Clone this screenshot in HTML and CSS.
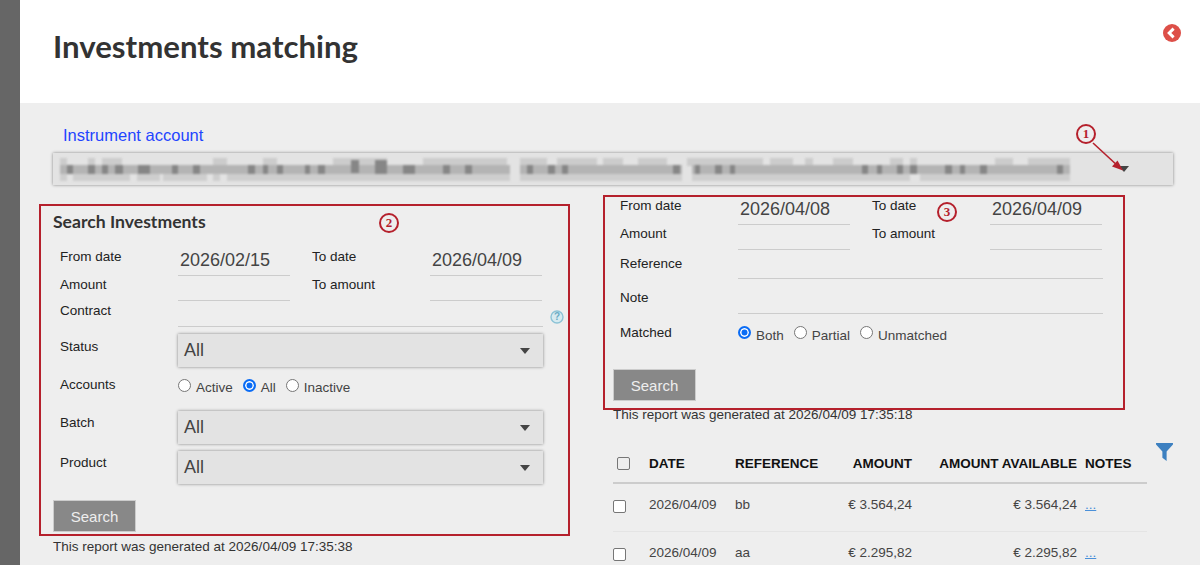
FILE: index.html
```html
<!DOCTYPE html>
<html lang="en">
<head>
    <meta charset="utf-8">
    <title>Investments matching</title>
    <link rel="stylesheet" href="styles.css">
</head>
<body>
    <div class="side-bar"></div>
    <div class="page">
        <header class="page-header">
            <h1>Investments matching</h1>
            <svg class="back-icon" viewBox="0 0 18 18" width="18" height="18">
                <circle cx="9" cy="9" r="9" fill="#dd4f48"/>
                <path d="M10.6 4.6 6.2 9l4.4 4.4" fill="none" stroke="#fff" stroke-width="3"/>
            </svg>
        </header>

        <main class="content">
            <div class="account-label">Instrument account</div>
            <div class="account-select">
                <!-- blurred account name -->
                <svg class="mosaic" width="1012" height="26" viewBox="0 0 1012 26">
                    <path fill="#cecece" d="M0 17h7v8H0zM13 17h57v8H13zM77 17h23v8H77zM103 17h44v8h-44zM153 17h7v8h-7zM167 17h283v8H167zM460 17h162v8H460zM632 17h218v8H632zM860 17h150v8H860z"/>
                    <path fill="#cccccc" d="M0 2h7v8H0zM28 2h7v8h-7zM42 2h20v8H42zM153 2h14v8h-14zM203 2h14v8h-14zM273 2h54v8h-54zM363 2h84v8h-84zM460 2h27v8h-27zM497 2h40v8h-40zM543 2h20v8h-20zM578 2h29v8h-29zM627 2h76v8h-76zM710 2h23v8h-23zM745 2h8v8h-8zM773 2h20v8h-20zM830 2h13v8h-13zM850 2h7v8h-7zM935 2h18v8h-18zM968 2h42v8h-42z"/>
                    <path fill="#b4b4b4" d="M0 9h450v9H0zM460 9h162v9H460zM632 9h378v9H632z"/>
                    <path fill="#868686" d="M7 9h6v9H7zM28 9h7v9h-7zM42 9h6v9h-6zM55 9h8v9h-8zM78 9h12v9H78zM112 9h6v9h-6zM133 9h7v9h-7zM188 9h7v9h-7zM203 9h5v9h-5zM217 9h6v9h-6zM245 9h5v9h-5zM258 9h7v9h-7zM291 4h8v13h-8zM315 4h12v14h-12zM343 9h12v9h-12zM383 9h7v9h-7zM405 9h7v9h-7zM467 9h6v9h-6zM488 9h7v9h-7zM502 9h6v9h-6zM613 9h7v9h-7zM635 9h5v9h-5zM655 9h7v9h-7zM670 9h5v9h-5zM802 9h6v9h-6zM817 9h5v9h-5zM837 9h6v9h-6zM850 9h7v9h-7zM885 9h7v9h-7zM900 9h5v9h-5zM920 9h7v9h-7zM997 9h6v9h-6z"/>
                </svg>
                <span class="caret"></span>
            </div>

            <div class="columns">
                <section class="panel-left">
                    <h2>Search Investments</h2>
                    <div class="form-grid">
                        <div class="row two">
                            <label>From date</label><div class="field date">2026/02/15</div>
                            <label>To date</label><div class="field date">2026/04/09</div>
                        </div>
                        <div class="row two">
                            <label>Amount</label><div class="field"></div>
                            <label>To amount</label><div class="field"></div>
                        </div>
                        <div class="row one contract-row">
                            <label>Contract</label><div class="field"></div>
                            <svg class="help-icon" viewBox="0 0 14 14" width="14" height="14">
                                <circle cx="7" cy="7" r="6" fill="#d6eaf0" stroke="#8cc3d6" stroke-width="1.4"/>
                                <text x="7" y="10.4" text-anchor="middle" class="help-mark">?</text>
                            </svg>
                        </div>
                        <div class="row one select-row status-row">
                            <label>Status</label><div class="select">All<span class="caret"></span></div>
                        </div>
                        <div class="row one radio-row accounts-row">
                            <label>Accounts</label>
                            <div class="radios">
                                <span class="radio-item"><span class="radio"></span>Active</span>
                                <span class="radio-item"><span class="radio checked"></span>All</span>
                                <span class="radio-item"><span class="radio"></span>Inactive</span>
                            </div>
                        </div>
                        <div class="row one select-row">
                            <label>Batch</label><div class="select">All<span class="caret"></span></div>
                        </div>
                        <div class="row one select-row product-row">
                            <label>Product</label><div class="select">All<span class="caret"></span></div>
                        </div>
                    </div>
                    <button class="search-btn" type="button">Search</button>
                    <p class="generated">This report was generated at 2026/04/09 17:35:38</p>
                </section>

                <section class="panel-right">
                    <div class="form-grid">
                        <div class="row two">
                            <label>From date</label><div class="field date">2026/04/08</div>
                            <label>To date</label><div class="field date">2026/04/09</div>
                        </div>
                        <div class="row two">
                            <label>Amount</label><div class="field"></div>
                            <label>To amount</label><div class="field"></div>
                        </div>
                        <div class="row one reference-row">
                            <label>Reference</label><div class="field"></div>
                        </div>
                        <div class="row one note-row">
                            <label>Note</label><div class="field"></div>
                        </div>
                        <div class="row one radio-row matched-row">
                            <label>Matched</label>
                            <div class="radios">
                                <span class="radio-item"><span class="radio checked"></span>Both</span>
                                <span class="radio-item"><span class="radio"></span>Partial</span>
                                <span class="radio-item"><span class="radio"></span>Unmatched</span>
                            </div>
                        </div>
                    </div>
                    <button class="search-btn" type="button">Search</button>
                    <p class="generated">This report was generated at 2026/04/09 17:35:18</p>

                    <svg class="filter-icon" viewBox="0 0 16 17" width="17" height="18">
                        <path d="M0 0h16v1.5L10 8v9l-4-3V8L0 1.5z" fill="#3d80c0"/>
                    </svg>
                    <table class="results">
                        <thead>
                            <tr>
                                <th class="col-check"><span class="checkbox head-check"></span></th>
                                <th class="col-date">DATE</th>
                                <th class="col-ref">REFERENCE</th>
                                <th class="col-amount num">AMOUNT</th>
                                <th class="col-avail num">AMOUNT AVAILABLE</th>
                                <th class="col-notes">NOTES</th>
                            </tr>
                        </thead>
                        <tbody>
                            <tr>
                                <td class="cell-check"><span class="checkbox"></span></td>
                                <td>2026/04/09</td>
                                <td>bb</td>
                                <td class="num">€ 3.564,24</td>
                                <td class="num">€ 3.564,24</td>
                                <td class="col-notes"><a class="notes-link" href="#">...</a></td>
                            </tr>
                            <tr>
                                <td class="cell-check"><span class="checkbox"></span></td>
                                <td>2026/04/09</td>
                                <td>aa</td>
                                <td class="num">€ 2.295,82</td>
                                <td class="num">€ 2.295,82</td>
                                <td class="col-notes"><a class="notes-link" href="#">...</a></td>
                            </tr>
                        </tbody>
                    </table>
                </section>
            </div>
        </main>
    </div>

    <!-- red annotations drawn over the screenshot -->
    <div class="mark-box box-left"></div>
    <div class="mark-box box-right"></div>
    <span class="mark-num num-one">1</span>
    <span class="mark-num num-two">2</span>
    <span class="mark-num num-three">3</span>
    <svg class="mark-arrow" viewBox="0 0 40 40" width="40" height="40">
        <path d="M1 1 27 25" stroke="#b5202c" stroke-width="1.6" fill="none"/>
        <path d="M31 28.5 20 24.5l5.5-6z" fill="#b5202c"/>
    </svg>
</body>
</html>
```

FILE: styles.css
```css
* {
    box-sizing: border-box;
}
html, body {
    height: 100%;
    overflow: hidden;
}
body {
    margin: 0;
    display: flex;
    font-family: "Liberation Sans", Arial, sans-serif;
    font-size: 13.5px;
    color: #333;
    background-color: #eee;
}
.side-bar {
    flex: 0 0 20px;
    background-color: #666;
}
.page {
    flex: 1;
    min-width: 0;
}
.page-header {
    height: 103px;
    background-color: white;
    display: flex;
    justify-content: space-between;
    align-items: flex-start;
    padding: 24px 19px 0 33px;
}
.page-header h1 {
    margin: 2px 0 0;
    font-family: Lato, sans-serif;
    font-size: 31.2px;
    font-weight: 700;
    line-height: 40px;
    color: #333;
}
.content {
    padding: 23px 27px 0 33px;
}
.account-label {
    margin-left: 10px;
    font-size: 16.5px;
    line-height: 18px;
    color: #1f45ff;
}
.account-select {
    margin-top: 9px;
    height: 32px;
    background-color: #e3e3e3;
    box-shadow: 0 0 3px rgba(0, 0, 0, 0.45);
    display: flex;
    align-items: center;
    justify-content: space-between;
    padding: 0 44px 0 7px;
}
.mosaic {
    filter: blur(0.8px);
}
.caret {
    width: 0;
    height: 0;
    border-left: 5.5px solid transparent;
    border-right: 5.5px solid transparent;
    border-top: 6px solid #444;
}
.columns {
    display: grid;
    grid-template-columns: 560px 1fr;
}
.panel-left {
    padding-top: 26px;
}
.panel-left h2 {
    margin: 0 0 12px;
    font-family: Lato, sans-serif;
    font-size: 17.6px;
    font-weight: 700;
    line-height: 22px;
    color: #333;
}
.panel-right {
    position: relative;
    padding-top: 9px;
}
.form-grid {
    display: flex;
    flex-direction: column;
}
/* Label and field rows */
.row {
    display: grid;
    align-items: start;
    padding-left: 7px;
}
.row.two {
    grid-template-columns: 118px 112px 140px 112px;
    height: 28px;
}
.row.one {
    grid-template-columns: 118px 365px 14px;
}
.row label {
    padding-top: 4px;
    line-height: 16px;
    color: #222;
}
.row.two label:nth-of-type(2) {
    padding-left: 22px;
}
.field {
    height: 100%;
    border-bottom: 1px solid #ccc;
    font-size: 18px;
    line-height: 30px;
    color: #444;
    padding-left: 2px;
}
.contract-row {
    height: 26px;
}
.contract-row label {
    padding-top: 2px;
}
.help-icon {
    margin: 9px 0 0 7px;
}
.help-mark {
    font-size: 10px;
    font-weight: 700;
    fill: #6aaac4;
    font-family: "Liberation Sans", Arial, sans-serif;
}
.status-row {
    margin-top: 7px;
}
.status-row label {
    padding-top: 5px;
}
.product-row {
    margin-top: 7px;
}
.select {
    height: 33px;
    background-color: #e3e3e3;
    box-shadow: 0 0 3px rgba(0, 0, 0, 0.45);
    display: flex;
    align-items: center;
    justify-content: space-between;
    padding: 0 13px 0 6px;
    font-size: 18px;
    color: #444;
}
/* Radio buttons */
.radio-row {
    padding-top: 10px;
}
.radio-row label {
    padding-top: 0;
}
.accounts-row {
    height: 44px;
}
.matched-row {
    height: 55px;
}
.matched-row label {
    padding-top: 1px;
}
.radios {
    display: flex;
    gap: 10px;
    padding-top: 3px;
}
.matched-row .radios {
    padding-top: 4px;
}
.radio-item {
    display: flex;
    align-items: flex-start;
    gap: 5px;
    line-height: 16px;
    color: #444;
}
.radio {
    width: 13px;
    height: 13px;
    margin-top: -1px;
    border: 1px solid #767676;
    border-radius: 50%;
    background-color: white;
}
.matched-row .radio {
    margin-top: -2px;
}
.radio.checked {
    border: 2px solid #0a6cf5;
    box-shadow: inset 0 0 0 1.5px white;
    background-color: #0a6cf5;
}
.reference-row {
    height: 29px;
}
.reference-row label {
    padding-top: 6px;
}
.note-row {
    height: 35px;
}
.note-row label {
    padding-top: 11px;
}
.search-btn {
    display: block;
    width: 83px;
    height: 32px;
    margin-top: 16px;
    border: 1px solid #ccc;
    background-color: #888;
    color: #eee;
    font-family: "Liberation Sans", Arial, sans-serif;
    font-size: 15px;
}
.panel-right .search-btn {
    margin-top: 0;
}
.generated {
    margin: 7px 0 0;
    line-height: 15px;
    color: #333;
}
.panel-right .generated {
    margin-top: 6px;
}
.filter-icon {
    position: absolute;
    left: 543px;
    top: 258px;
}
/* Table of results */
.results {
    width: 534px;
    margin-top: 23px;
    border-collapse: collapse;
    table-layout: fixed;
}
.results th {
    height: 38px;
    padding: 0;
    text-align: left;
    font-weight: 700;
    color: #111;
    border-bottom: 2px solid #ccc;
}
.results td {
    height: 48px;
    padding: 0 0 6px;
    color: #444;
    border-bottom: 1px solid #e4e4e4;
}
.results .num {
    text-align: right;
}
.col-check { width: 36px; }
.col-date { width: 86px; }
.col-ref { width: 70px; }
.col-amount { width: 107px; }
.col-avail { width: 165px; }
.results .col-notes {
    padding-left: 8px;
}
.results .cell-check {
    padding: 0 0 2px;
}
.checkbox {
    display: block;
    width: 13px;
    height: 13px;
    border: 1px solid #767676;
    border-radius: 2px;
    background-color: white;
}
.head-check {
    margin-left: 4px;
    background-color: transparent;
}
.notes-link {
    color: #4a90d9;
}
/* Annotations */
.mark-box {
    position: absolute;
    border: 2px solid #b5202c;
}
.box-left {
    left: 39px;
    top: 204px;
    width: 531px;
    height: 332px;
}
.box-right {
    left: 603px;
    top: 195px;
    width: 522px;
    height: 215px;
}
.mark-num {
    position: absolute;
    width: 20px;
    height: 20px;
    border: 2px solid #b5202c;
    border-radius: 50%;
    color: #b5202c;
    font-family: "Liberation Serif", serif;
    font-size: 13px;
    font-weight: 700;
    line-height: 16px;
    text-align: center;
}
.num-one { left: 1076px; top: 124px; }
.num-two { left: 379px; top: 213px; }
.num-three { left: 937px; top: 202px; }
.mark-arrow {
    position: absolute;
    left: 1092px;
    top: 142px;
}
```
